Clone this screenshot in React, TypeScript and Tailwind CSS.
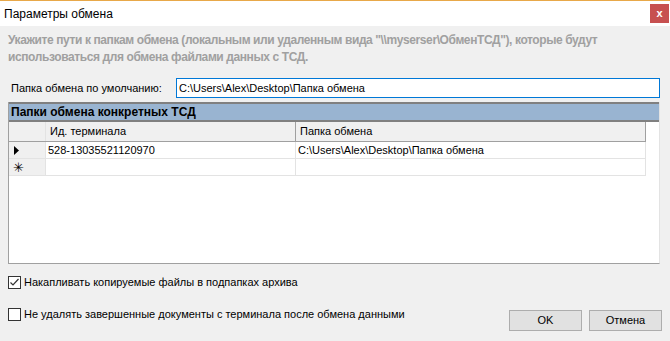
const font = { fontFamily: '"Liberation Sans", Arial, sans-serif' };

const Checkbox = ({ checked }: { checked?: boolean }) => (
  <div className="w-[13px] h-[13px] border border-[#333333] bg-white flex items-center justify-center shrink-0">
    {checked && (
      <svg width="11" height="11" viewBox="0 0 11 11">
        <path d="M1.5 5.5 L4 8 L9.5 2" fill="none" stroke="#333333" strokeWidth="1.2" />
      </svg>
    )}
  </div>
);

const App = () => {
  const rows = [{ id: '528-13035521120970', path: 'C:\\Users\\Alex\\Desktop\\Папка обмена' }];

  return (
    <div className="w-[670px] h-[341px] bg-[#f0f0f0] overflow-hidden text-black" style={font}>
      {/* Title bar */}
      <div className="h-[26px] bg-white border-t border-[#e8a849] flex items-center pl-[4px]">
        <span className="text-[12px]">Параметры обмена</span>
        <div className="ml-auto mr-[1px] w-[19px] h-[19px] bg-[#c75050] flex items-center justify-center text-white text-[11px] font-bold leading-none">
          x
        </div>
      </div>

      {/* Description */}
      <div className="mt-[6px] px-[8px] text-[12px] leading-[17px] font-bold text-[#a0a0a0] tracking-[-0.4px]">
        Укажите пути к папкам обмена (локальным или удаленным вида "\\myserser\ОбменТСД"), которые будут
        <br />
        использоваться для обмена файлами данных с ТСД.
      </div>

      {/* Default folder */}
      <div className="mt-[12px] flex items-center h-[20px]">
        <span className="pl-[11px] w-[176px] text-[11px]">Папка обмена по умолчанию:</span>
        <div className="w-[484px] h-[20px] border border-[#0078d7] bg-white flex items-center pl-[2px] text-[11px]">
          C:\Users\Alex\Desktop\Папка обмена
        </div>
      </div>

      {/* Grid */}
      <div className="mt-[4px] ml-[8px] w-[652px] h-[162px] border-l border-b border-r border-[#a0a0a0] border-r-[#e3e3e3] bg-white flex flex-col text-[11px]">
        <div className="h-[20px] bg-[#99b4d1] border-t-2 border-b-2 border-[#808080] flex items-center pl-[2px] font-bold text-[12px]">
          Папки обмена конкретных ТСД
        </div>
        <div className="flex h-[20px] bg-[#f0f0f0] border-b border-[#a0a0a0] w-[637px] border-r">
          <div className="w-[37px] border-r border-[#e3e3e3]" />
          <div className="w-[250px] border-r border-[#a0a0a0] flex items-center pl-[4px]">Ид. терминала</div>
          <div className="flex-1 flex items-center pl-[4px]">Папка обмена</div>
        </div>
        {rows.map((r) => (
          <div key={r.id} className="flex h-[17px] border-b border-[#e3e3e3] w-[637px] border-r">
            <div className="w-[37px] bg-[#f0f0f0] border-r border-[#e3e3e3] flex items-center pl-[5px]">
              <svg width="6" height="9" viewBox="0 0 6 9">
                <path d="M0 0 L5 4.5 L0 9 Z" fill="#000" />
              </svg>
            </div>
            <div className="w-[250px] border-r border-[#e3e3e3] flex items-center pl-[2px]">{r.id}</div>
            <div className="flex-1 flex items-center pl-[2px]">{r.path}</div>
          </div>
        ))}
        <div className="flex h-[17px] border-b border-[#e3e3e3] w-[637px] border-r">
          <div className="w-[37px] bg-[#f0f0f0] border-r border-[#e3e3e3] flex items-center pl-[4px] text-[13px] leading-none">
            ✳
          </div>
          <div className="w-[250px] border-r border-[#e3e3e3]" />
          <div className="flex-1" />
        </div>
      </div>

      {/* Options + buttons */}
      <div className="flex mt-[12px] pl-[8px]">
        <div className="flex flex-col gap-[19px] text-[11px]">
          <label className="flex items-center gap-[3px] h-[13px]">
            <Checkbox checked />
            <span>Накапливать копируемые файлы в подпапках архива</span>
          </label>
          <label className="flex items-center gap-[3px] h-[13px]">
            <Checkbox />
            <span>Не удалять завершенные документы с терминала после обмена данными</span>
          </label>
        </div>
        <div className="ml-auto mr-[8px] mt-[34px] flex gap-[7px] text-[11px]">
          <button className="w-[73px] h-[21px] bg-[#e1e1e1] border border-[#adadad]">OK</button>
          <button className="w-[73px] h-[21px] bg-[#e1e1e1] border border-[#adadad]">Отмена</button>
        </div>
      </div>
    </div>
  );
};

export default App;
